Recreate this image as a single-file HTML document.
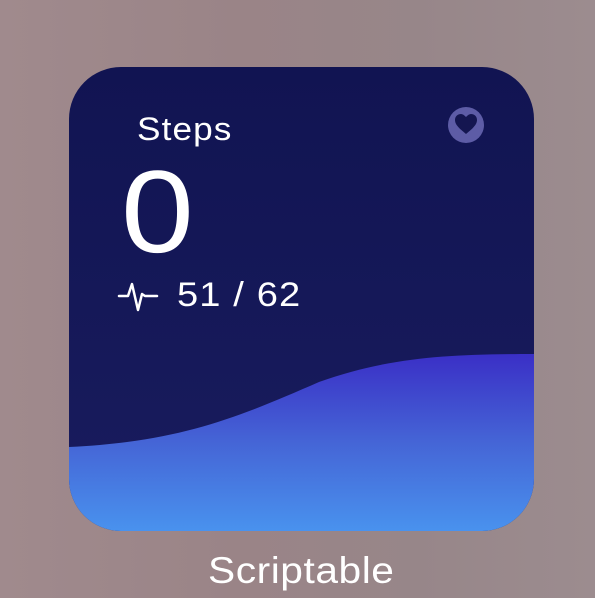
<!DOCTYPE html>
<html><head><style>
html,body{margin:0;padding:0;width:595px;height:598px;overflow:hidden;font-family:"Liberation Sans",sans-serif;}
body{background:linear-gradient(90deg,#a08a8d 0%,#9a8487 40%,#978689 70%,#9c8c8f 100%);position:relative;}
.w{position:absolute;left:69px;top:67px;width:465px;height:464px;border-radius:52px;overflow:hidden;background:linear-gradient(180deg,#111452 0%,#191c5e 100%);}
.t{position:absolute;color:#fff;white-space:nowrap;transform-origin:left top;}
</style></head><body>
<div class="w">
<svg width="465" height="464" style="position:absolute;left:0;top:0">
<defs><linearGradient id="g" x1="0" y1="0" x2="0" y2="1"><stop offset="0" stop-color="#3a2fc6"/><stop offset="0.5" stop-color="#4565d6"/><stop offset="1" stop-color="#4992ee"/></linearGradient></defs>
<path d="M0 380 C110 375 170 350 250 315 C320 290 380 287 465 287 L465 464 L0 464 Z" fill="url(#g)"/>
<circle cx="397" cy="58" r="18" fill="#5d5ca6"/>
<path d="M397 67 C391 62 386 58 386 53 C386 49 389 47 392 47 C394 47 396 49 397 50 C398 49 400 47 402 47 C405 47 408 49 408 53 C408 58 403 62 397 67 Z" fill="#141650"/>
<path d="M50 229 L59 229 L63 217 L69 243 L73 227 L76 229 L88 229" fill="none" stroke="#fff" stroke-width="2.5" stroke-linejoin="round" stroke-linecap="round"/>
</svg>
<div class="t" style="left:68px;top:44px;font-size:32px;letter-spacing:1px;transform:scaleX(1.1);">Steps</div>
<div class="t" style="left:52px;top:80px;font-size:117px;line-height:130px;transform:scaleX(1.12);">0</div>
<div class="t" style="left:108px;top:209px;font-size:34px;letter-spacing:1px;transform:scaleX(1.12);">51 / 62</div>
</div>
<div class="t" style="left:208px;top:550px;font-size:37px;letter-spacing:0.5px;transform:scaleX(1.1);">Scriptable</div>
</body></html>
